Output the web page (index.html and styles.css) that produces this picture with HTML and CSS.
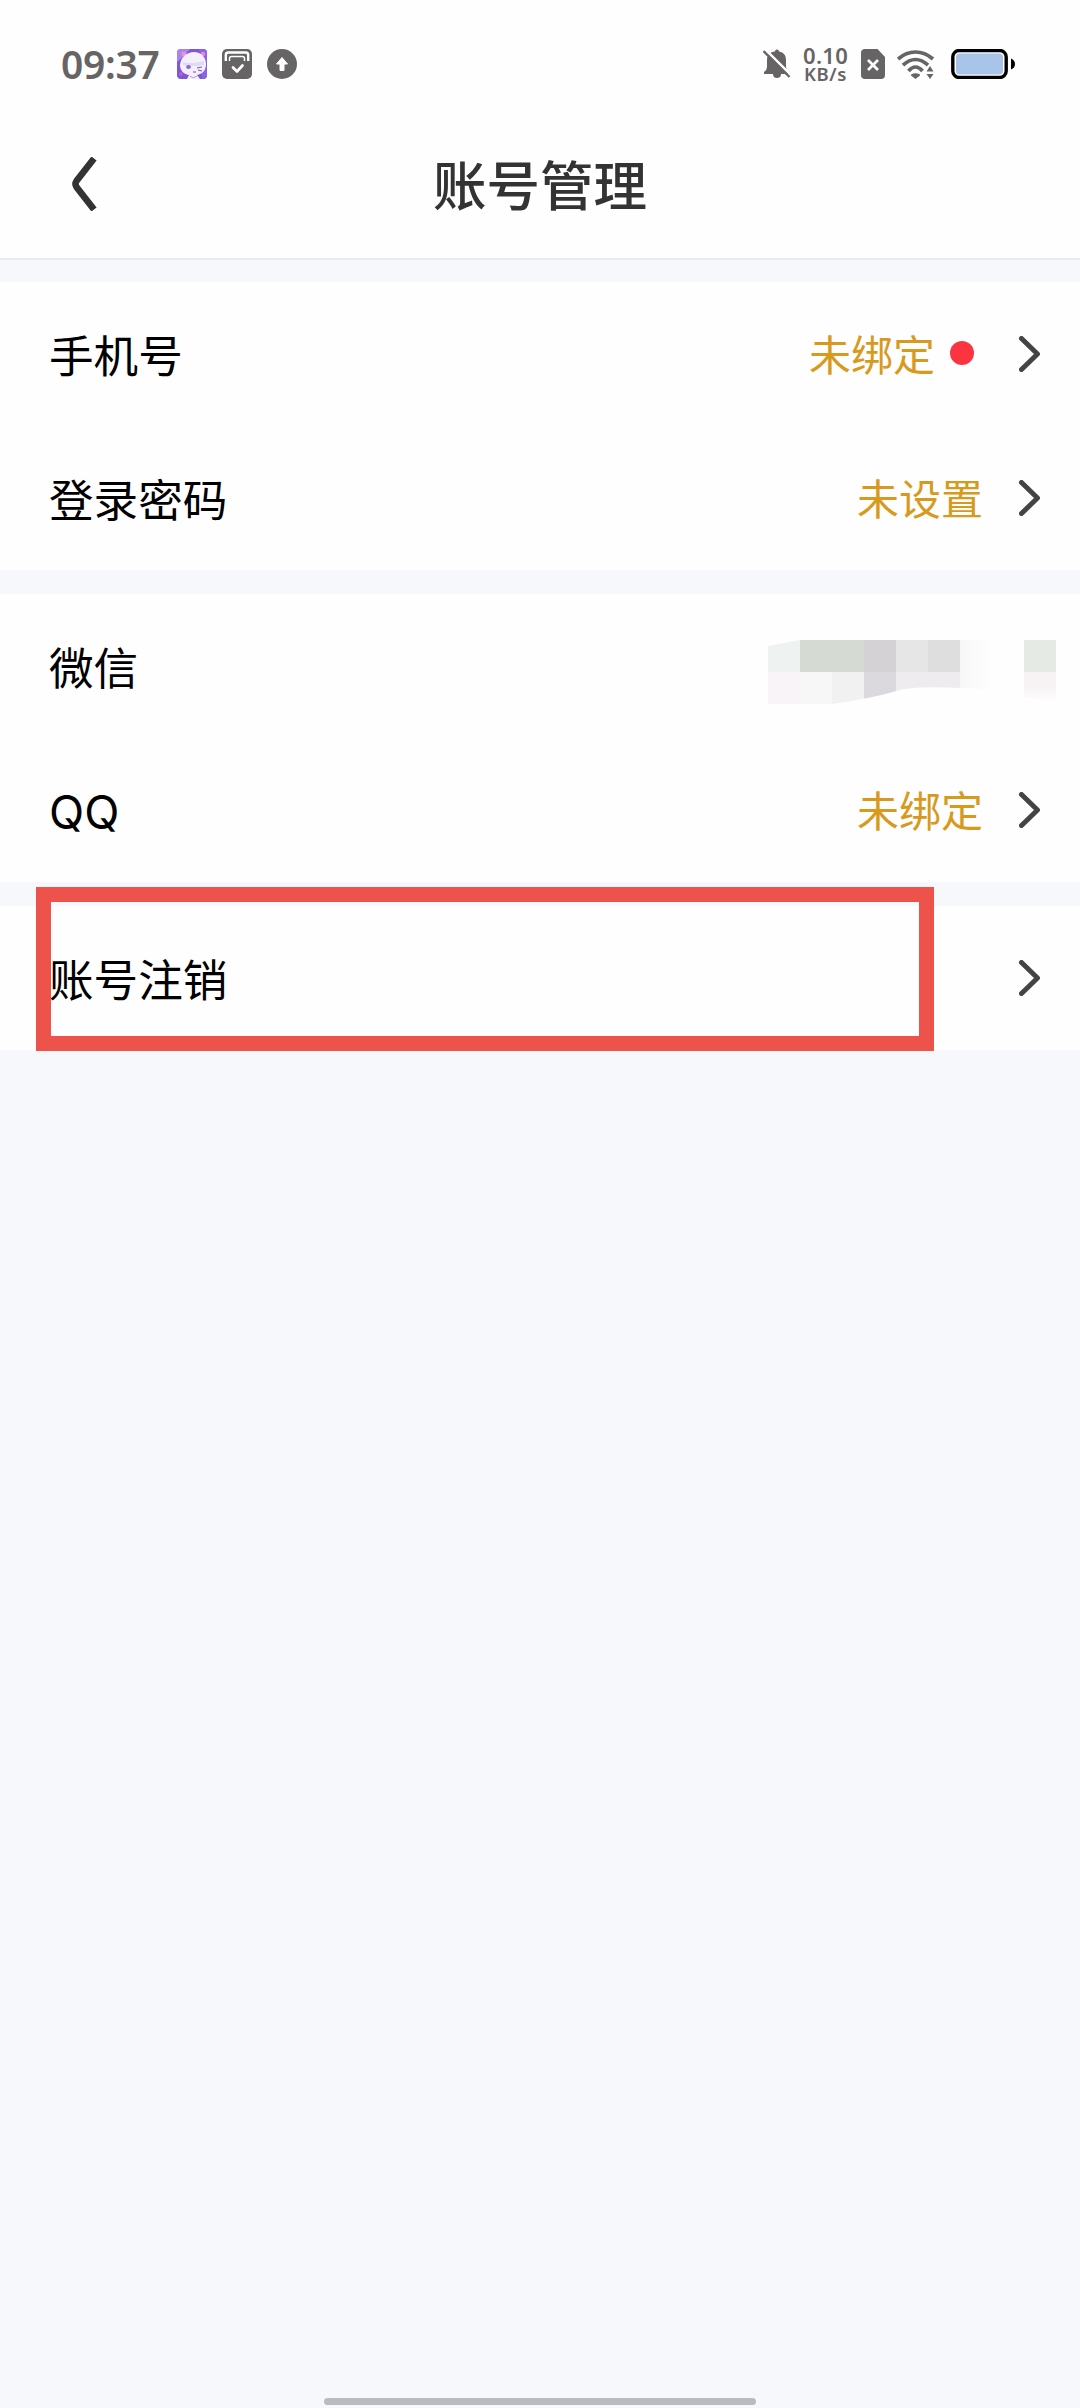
FILE: index.html
```html
<!DOCTYPE html>
<html lang="zh-CN">
<head>
<meta charset="utf-8">
<title>账号管理</title>
<link rel="stylesheet" href="styles.css">
</head>
<body>
<div class="screen">
  <div class="status-bar">
    <div class="status-left">
      <span class="clock">09:37</span>
      <svg class="icon-30" viewBox="0 0 30 30">
        <defs><clipPath id="avatar"><rect width="30" height="30" rx="4"/></clipPath></defs>
        <g clip-path="url(#avatar)">
          <rect width="30" height="30" fill="#7c58d6"/>
          <path d="M0 0h13L5 9 0 13z" fill="#a984ee"/>
          <path d="M22 0h8v30h-5z" fill="#8b63e4"/>
          <circle cx="7" cy="5" r="2.5" fill="#ee8fd8"/>
          <circle cx="26" cy="5" r="2.3" fill="#e887dc"/>
          <circle cx="4" cy="25" r="2" fill="#b85fd6"/>
          <path d="M3 16C4 8 10 3 17 3s12 5 12 12-4 10-9 11l3 4H10l2-4C6 25 3 21 3 16z" fill="#f5effc"/>
          <path d="M6 13c6 2 14 1 21-1v4c-5 1-8 1-11 1s-6 0-10-1z" fill="#dcdcf8"/>
          <ellipse cx="11.5" cy="18" rx="2.4" ry="2" fill="#8b68cc"/>
          <path d="M20 19l5-1M21 21l4 1" stroke="#7d5bb0" stroke-width="1.2"/>
          <path d="M16 23h3" stroke="#76508e" stroke-width="1.2"/>
          <path d="M13 27l3 2 4-2" stroke="#a89cdf" fill="none"/>
        </g>
      </svg>
      <svg class="icon-30" viewBox="0 0 30 30">
        <rect width="30" height="30" rx="5" fill="#666465"/>
        <path d="M3.800 12V6q0-2.500 2.500-2.500h17.400q2.500 0 2.500 2.500v6" fill="none" stroke="#fff" stroke-width="2.400"/>
        <path d="M7.500 12V9.500q0-2 2-2h11q2 0 2 2V12" fill="none" stroke="#fff" stroke-width="1.500"/>
        <path d="M11 18.500l4 4 5.500-6" fill="none" stroke="#fff" stroke-width="2.700" stroke-linecap="round" stroke-linejoin="round"/>
      </svg>
      <svg class="icon-30" viewBox="0 0 30 30">
        <circle cx="15" cy="15" r="15" fill="#666465"/>
        <path d="M15 8.500l5.500 6.500h-3.500v6.500h-4V15H9.500z" fill="#fff" stroke="#fff" stroke-linejoin="round"/>
      </svg>
    </div>
    <div class="status-right">
      <svg class="bell" viewBox="0 0 28 30">
        <path d="M14 .5c1.500 0 2 1 2 2 5 1 7 4 7 8.500V18q0 3 3 5v2H18a4 4 0 0 1-8 0H1v-2q3-2 3-5v-7C4 6 7 3 12 2.500c0-1 .5-2 2-2z" fill="#666465"/>
        <path d="M2 .2L28 26" stroke="#fff" stroke-width="2.600"/>
        <path d="M.5 2L26.500 28" stroke="#666465" stroke-width="2.300"/>
      </svg>
      <div class="speed"><span class="rate">0.10</span><span class="unit">KB/s</span></div>
      <svg class="sim" viewBox="0 0 24 30">
        <path d="M4 0h12.500L24 8v18q0 4-4 4H4q-4 0-4-4V4q0-4 4-4z" fill="#666465"/>
        <path d="M7 11l10 10M17 11L7 21" stroke="#fff" stroke-width="2.700"/>
      </svg>
      <svg class="wifi" viewBox="0 0 38 30">
        <g fill="none" stroke="#666465" stroke-width="3.700">
          <path d="M1 10Q9 3 18.500 3T36 10"/>
          <path d="M6 16.200Q12 10.500 18.500 10.500T31 16.200"/>
          <path d="M11.500 22Q15 18 18.500 18T25.500 22"/>
        </g>
        <path d="M14 25.500q4.500-2.500 9 0v1L18.500 30 14 26.500zM33 17l3.500 5.500h-7zM33 30l3.500-5h-7z" fill="#666465"/>
      </svg>
      <svg class="battery" viewBox="0 0 65 30">
        <rect x="1.800" y="1.500" width="53.400" height="27" rx="6.500" fill="#fff" stroke="#000" stroke-width="3.400"/>
        <rect x="5" y="4.500" width="47" height="21" rx="3.500" fill="#a8c5e9"/>
        <path d="M60 9.500q4 1.500 4 5.500t-4 5.500z" fill="#000"/>
      </svg>
    </div>
  </div>
  <header class="nav-bar">
    <svg class="back" viewBox="0 0 28 54"><path d="M24 1.500L6.500 24q-2 3 0 6L24 52.500" fill="none" stroke="#333" stroke-width="6.600"/></svg>
    <h1 class="title">账号管理</h1>
  </header>
  <main class="groups">
    <section class="group">
      <div class="row"><span class="label">手机号</span><span class="value">未绑定</span><i class="dot"></i><svg class="chevron" viewBox="0 0 22 36"><path d="M2.500 2.500L18.500 18 2.500 33.500"/></svg></div>
      <div class="row"><span class="label">登录密码</span><span class="value">未设置</span><svg class="chevron" viewBox="0 0 22 36"><path d="M2.500 2.500L18.500 18 2.500 33.500"/></svg></div>
    </section>
    <section class="group">
      <div class="row masked"><span class="label">微信</span>
        <svg class="mosaic" viewBox="0 0 292 68">
          <defs>
            <clipPath id="brush"><path d="M0 6L32 0H224V50Q150 44 128 51T64 64H0z"/></clipPath>
            <linearGradient id="fade"><stop offset="0" stop-color="#f7f7f8"/><stop offset="1" stop-color="#fefefe"/></linearGradient>
            <linearGradient id="fade-down" x2="0" y2="1"><stop offset=".5" stop-color="#f7f3f4"/><stop offset="1" stop-color="#fefefe"/></linearGradient>
          </defs>
          <g clip-path="url(#brush)" shape-rendering="crispEdges">
            <rect width="32" height="32" fill="#eef2f1"/>
            <rect x="32" width="64" height="32" fill="#d5dad3"/>
            <rect x="96" width="32" height="32" fill="#d4d2d5"/>
            <rect x="128" width="32" height="32" fill="#e6e6e6"/>
            <rect x="160" width="32" height="32" fill="#dedede"/>
            <rect y="32" width="32" height="32" fill="#f8f4f7"/>
            <rect x="32" y="32" width="32" height="32" fill="#f7f7f7"/>
            <rect x="64" y="32" width="32" height="32" fill="#f1f1f1"/>
            <rect x="96" y="32" width="32" height="32" fill="#dbd9dd"/>
            <rect x="128" y="32" width="64" height="32" fill="#eeecef"/>
            <rect x="192" width="32" height="64" fill="url(#fade)"/>
          </g>
          <rect x="256" width="32" height="32" fill="#e5eae5"/>
          <path d="M256 32h32v30l-32-5z" fill="url(#fade-down)"/>
        </svg>
      </div>
      <div class="row"><span class="label latin">QQ</span><span class="value">未绑定</span><svg class="chevron" viewBox="0 0 22 36"><path d="M2.500 2.500L18.500 18 2.500 33.500"/></svg></div>
    </section>
    <section class="group highlighted">
      <div class="row"><span class="label">账号注销</span><svg class="chevron" viewBox="0 0 22 36"><path d="M2.500 2.500L18.500 18 2.500 33.500"/></svg></div>
      <div class="highlight"></div>
    </section>
  </main>
  <div class="home-indicator"></div>
</div>
</body>
</html>
```
FILE: styles.css
```css
* { box-sizing: border-box; }
body { margin: 0; font-family: "Noto Sans CJK SC", sans-serif; }
svg { display: block; flex: none; }
.screen {
  width: 1080px;
  height: 2408px;
  background: #f6f8fc;
  display: flex;
  flex-direction: column;
  overflow: hidden;
}
.status-bar {
  height: 128px;
  padding: 0 64px 0 61px;
  background: #fefefe;
  display: flex;
  justify-content: space-between;
  color: #666465;
  font-family: "Noto Sans", sans-serif;
}
.status-left, .status-right { height: 128px; display: flex; align-items: center; }
.status-left { gap: 15px; }
.clock { width: 101px; font-size: 39px; font-weight: 600; line-height: 40px; letter-spacing: -0.3px; white-space: nowrap; }
.icon-30 { width: 30px; height: 30px; }
.bell { width: 28px; height: 30px; margin: 0 12px 0 0; }
.speed { width: 47px; margin-right: 11px; display: flex; flex-direction: column; white-space: nowrap; font-weight: 600; }
.rate { font-size: 22px; line-height: 19px; letter-spacing: 0.3px; }
.unit { font-size: 18.5px; line-height: 18px; padding-left: 1px; letter-spacing: 0.6px; }
.sim { width: 24px; height: 30px; margin-right: 12px; }
.wifi { width: 38px; height: 30px; margin-right: 16px; }
.battery { width: 65px; height: 30px; }
.nav-bar {
  height: 130px;
  padding-bottom: 19px;
  background: #fefefe;
  display: grid;
  grid-template-columns: 120px 1fr 120px;
  align-items: center;
}
.status-bar, .nav-bar { flex: none; }
.back { width: 28px; height: 54px; margin-left: 70px; }
.title { margin: 0; padding-bottom: 1px; text-align: center; font-size: 53.5px; line-height: 60px; font-weight: 500; color: #333; }
.groups {
  padding-top: 22px;
  border-top: 2px solid #e8eaed;
  display: flex;
  flex-direction: column;
  gap: 24px;
}
.group { background: #fefefe; }
.row { height: 144px; padding: 0 39px 0 49px; display: flex; align-items: center; }
.label { margin-right: auto; padding-bottom: 1px; font-size: 44.6px; line-height: 60px; color: #000; }
.latin { font-family: Inter, sans-serif; font-size: 46px; padding: 4px 0 0; }
.value { padding-bottom: 2px; font-size: 42px; line-height: 60px; color: #d79a1c; }
.dot { width: 24px; height: 24px; margin: 0 0 2px 15px; border-radius: 50%; background: #fb3440; }
.chevron { width: 22px; height: 36px; margin-left: 36px; fill: none; stroke: #444; stroke-width: 5; stroke-linecap: round; stroke-linejoin: round; }
.dot + .chevron { margin-left: 45px; }
.masked { padding-right: 20px; }
.mosaic { width: 292px; height: 68px; margin-top: 16px; }
.highlighted { position: relative; }
.highlight { position: absolute; left: 36px; top: -19px; width: 898px; height: 164px; border: 15px solid #ee534b; }
.home-indicator { width: 432px; height: 7px; margin: auto auto 3px; border-radius: 4px; background: #b9bbbf; flex: none; }
```
